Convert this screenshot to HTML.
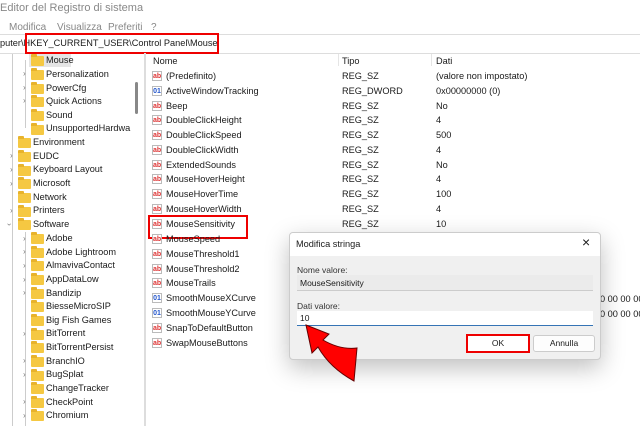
<!DOCTYPE html><html><head><meta charset="utf-8"><style>
body{margin:0;width:640px;height:426px;overflow:hidden;background:#fff;font-family:"Liberation Sans",sans-serif;font-size:9.2px;color:#1a1a1a;position:relative}
.a{position:absolute;white-space:nowrap}
.f{position:absolute;width:13px;height:10px;background:#f5c842;border-radius:1px}
.f:before{content:"";position:absolute;left:0;top:-2px;width:6px;height:3px;background:#e8b32c;border-radius:1px 1px 0 0}
.c{position:absolute;color:#777;font-size:8px}
.ic{position:absolute;width:10px;height:10px;border:1px solid #bbb;background:#fff;font-size:7px;font-weight:bold;color:#d33;line-height:9px;text-align:center;box-sizing:border-box}
.ib{color:#2255cc}
</style></head><body>
<div class="a" style="left:0;top:2px;font-size:11px;color:#888">Editor del Registro di sistema</div>
<div class="a" style="left:9px;top:22px;color:#888;font-size:10px">Modifica</div>
<div class="a" style="left:57px;top:22px;color:#888;font-size:10px">Visualizza</div>
<div class="a" style="left:108px;top:22px;color:#888;font-size:10px">Preferiti</div>
<div class="a" style="left:151px;top:22px;color:#888;font-size:10px">?</div>
<div style="position:absolute;left:0;top:34px;width:640px;height:18px;border-top:1px solid #ddd;border-bottom:1px solid #ddd"></div>
<div class="a" style="left:0;top:38px">puter\HKEY_CURRENT_USER\Control Panel\Mouse</div>
<div style="position:absolute;left:25px;top:33px;width:190px;height:17px;border:2px solid #e00"></div>
<div style="position:absolute;left:144px;top:53px;width:2px;height:373px;background:#ddd"></div>
<div style="position:absolute;left:135px;top:82px;width:3px;height:32px;background:#888;border-radius:2px"></div>
<div style="position:absolute;left:29px;top:54px;width:42px;height:13px;background:#e5e5e5"></div>
<div style="position:absolute;left:25px;top:60px;width:1px;height:68px;background:#ccc"></div>
<div style="position:absolute;left:12px;top:54px;width:1px;height:372px;background:#ccc"></div>
<div class="f" style="left:31px;top:56px"></div><div class="a" style="left:46px;top:55px">Mouse</div>
<div class="c" style="left:23px;top:69px">›</div><div class="f" style="left:31px;top:70px"></div><div class="a" style="left:46px;top:69px">Personalization</div>
<div class="c" style="left:23px;top:83px">›</div><div class="f" style="left:31px;top:84px"></div><div class="a" style="left:46px;top:83px">PowerCfg</div>
<div class="c" style="left:23px;top:96px">›</div><div class="f" style="left:31px;top:97px"></div><div class="a" style="left:46px;top:96px">Quick Actions</div>
<div class="f" style="left:31px;top:111px"></div><div class="a" style="left:46px;top:110px">Sound</div>
<div class="f" style="left:31px;top:125px"></div><div class="a" style="left:46px;top:123px">UnsupportedHardwa</div>
<div class="f" style="left:18px;top:138px"></div><div class="a" style="left:33px;top:137px">Environment</div>
<div class="c" style="left:10px;top:151px">›</div><div class="f" style="left:18px;top:152px"></div><div class="a" style="left:33px;top:151px">EUDC</div>
<div class="c" style="left:10px;top:165px">›</div><div class="f" style="left:18px;top:166px"></div><div class="a" style="left:33px;top:164px">Keyboard Layout</div>
<div class="c" style="left:10px;top:179px">›</div><div class="f" style="left:18px;top:179px"></div><div class="a" style="left:33px;top:178px">Microsoft</div>
<div class="f" style="left:18px;top:193px"></div><div class="a" style="left:33px;top:192px">Network</div>
<div class="c" style="left:10px;top:206px">›</div><div class="f" style="left:18px;top:207px"></div><div class="a" style="left:33px;top:205px">Printers</div>
<div class="c" style="left:8px;top:220px;transform:rotate(90deg)">›</div><div class="f" style="left:18px;top:220px"></div><div class="a" style="left:33px;top:219px">Software</div>
<div style="position:absolute;left:25px;top:232px;width:1px;height:194px;background:#ccc"></div>
<div class="c" style="left:23px;top:234px">›</div><div class="f" style="left:31px;top:234px"></div><div class="a" style="left:46px;top:233px">Adobe</div>
<div class="c" style="left:23px;top:247px">›</div><div class="f" style="left:31px;top:248px"></div><div class="a" style="left:46px;top:247px">Adobe Lightroom</div>
<div class="c" style="left:23px;top:261px">›</div><div class="f" style="left:31px;top:261px"></div><div class="a" style="left:46px;top:260px">AlmavivaContact</div>
<div class="c" style="left:23px;top:275px">›</div><div class="f" style="left:31px;top:275px"></div><div class="a" style="left:46px;top:274px">AppDataLow</div>
<div class="c" style="left:23px;top:288px">›</div><div class="f" style="left:31px;top:289px"></div><div class="a" style="left:46px;top:288px">Bandizip</div>
<div class="f" style="left:31px;top:302px"></div><div class="a" style="left:46px;top:301px">BiesseMicroSIP</div>
<div class="f" style="left:31px;top:316px"></div><div class="a" style="left:46px;top:315px">Big Fish Games</div>
<div class="c" style="left:23px;top:329px">›</div><div class="f" style="left:31px;top:330px"></div><div class="a" style="left:46px;top:328px">BitTorrent</div>
<div class="f" style="left:31px;top:343px"></div><div class="a" style="left:46px;top:342px">BitTorrentPersist</div>
<div class="c" style="left:23px;top:356px">›</div><div class="f" style="left:31px;top:357px"></div><div class="a" style="left:46px;top:356px">BranchIO</div>
<div class="c" style="left:23px;top:370px">›</div><div class="f" style="left:31px;top:371px"></div><div class="a" style="left:46px;top:369px">BugSplat</div>
<div class="f" style="left:31px;top:384px"></div><div class="a" style="left:46px;top:383px">ChangeTracker</div>
<div class="c" style="left:23px;top:397px">›</div><div class="f" style="left:31px;top:398px"></div><div class="a" style="left:46px;top:397px">CheckPoint</div>
<div class="c" style="left:23px;top:411px">›</div><div class="f" style="left:31px;top:411px"></div><div class="a" style="left:46px;top:410px">Chromium</div>
<div style="position:absolute;left:338px;top:54px;width:1px;height:12px;background:#e5e5e5"></div>
<div style="position:absolute;left:431px;top:54px;width:1px;height:12px;background:#e5e5e5"></div>
<div class="a" style="left:153px;top:56px">Nome</div><div class="a" style="left:342px;top:56px">Tipo</div><div class="a" style="left:436px;top:56px">Dati</div>
<div class="ic" style="left:152px;top:71px">ab</div><div class="a" style="left:166px;top:71px">(Predefinito)</div><div class="a" style="left:342px;top:71px">REG_SZ</div><div class="a" style="left:436px;top:71px">(valore non impostato)</div>
<div class="ic ib" style="left:152px;top:86px">01</div><div class="a" style="left:166px;top:86px">ActiveWindowTracking</div><div class="a" style="left:342px;top:86px">REG_DWORD</div><div class="a" style="left:436px;top:86px">0x00000000 (0)</div>
<div class="ic" style="left:152px;top:101px">ab</div><div class="a" style="left:166px;top:101px">Beep</div><div class="a" style="left:342px;top:101px">REG_SZ</div><div class="a" style="left:436px;top:101px">No</div>
<div class="ic" style="left:152px;top:115px">ab</div><div class="a" style="left:166px;top:115px">DoubleClickHeight</div><div class="a" style="left:342px;top:115px">REG_SZ</div><div class="a" style="left:436px;top:115px">4</div>
<div class="ic" style="left:152px;top:130px">ab</div><div class="a" style="left:166px;top:130px">DoubleClickSpeed</div><div class="a" style="left:342px;top:130px">REG_SZ</div><div class="a" style="left:436px;top:130px">500</div>
<div class="ic" style="left:152px;top:145px">ab</div><div class="a" style="left:166px;top:145px">DoubleClickWidth</div><div class="a" style="left:342px;top:145px">REG_SZ</div><div class="a" style="left:436px;top:145px">4</div>
<div class="ic" style="left:152px;top:160px">ab</div><div class="a" style="left:166px;top:160px">ExtendedSounds</div><div class="a" style="left:342px;top:160px">REG_SZ</div><div class="a" style="left:436px;top:160px">No</div>
<div class="ic" style="left:152px;top:174px">ab</div><div class="a" style="left:166px;top:174px">MouseHoverHeight</div><div class="a" style="left:342px;top:174px">REG_SZ</div><div class="a" style="left:436px;top:174px">4</div>
<div class="ic" style="left:152px;top:189px">ab</div><div class="a" style="left:166px;top:189px">MouseHoverTime</div><div class="a" style="left:342px;top:189px">REG_SZ</div><div class="a" style="left:436px;top:189px">100</div>
<div class="ic" style="left:152px;top:204px">ab</div><div class="a" style="left:166px;top:204px">MouseHoverWidth</div><div class="a" style="left:342px;top:204px">REG_SZ</div><div class="a" style="left:436px;top:204px">4</div>
<div class="ic" style="left:152px;top:219px">ab</div><div class="a" style="left:166px;top:219px">MouseSensitivity</div><div class="a" style="left:342px;top:219px">REG_SZ</div><div class="a" style="left:436px;top:219px">10</div>
<div style="position:absolute;left:148px;top:215px;width:96px;height:20px;border:2px solid #e00"></div>
<div class="ic" style="left:152px;top:234px">ab</div><div class="a" style="left:166px;top:234px">MouseSpeed</div>
<div class="ic" style="left:152px;top:249px">ab</div><div class="a" style="left:166px;top:249px">MouseThreshold1</div>
<div class="ic" style="left:152px;top:264px">ab</div><div class="a" style="left:166px;top:264px">MouseThreshold2</div>
<div class="ic" style="left:152px;top:278px">ab</div><div class="a" style="left:166px;top:278px">MouseTrails</div>
<div class="ic ib" style="left:152px;top:293px">01</div><div class="a" style="left:166px;top:293px">SmoothMouseXCurve</div><div class="a" style="left:600px;top:294px">0 00 00 00</div>
<div class="ic ib" style="left:152px;top:308px">01</div><div class="a" style="left:166px;top:308px">SmoothMouseYCurve</div><div class="a" style="left:600px;top:309px">0 00 00 00</div>
<div class="ic" style="left:152px;top:323px">ab</div><div class="a" style="left:166px;top:323px">SnapToDefaultButton</div>
<div class="ic" style="left:152px;top:338px">ab</div><div class="a" style="left:166px;top:338px">SwapMouseButtons</div>
<div style="position:absolute;left:289px;top:232px;width:310px;height:126px;background:#f0f0f0;border:1px solid #ccc;border-radius:4px;box-shadow:0 8px 24px rgba(0,0,0,.25);overflow:hidden">
<div style="position:absolute;left:0;top:0;width:310px;height:23px;background:#fff"></div>
<div class="a" style="left:6px;top:6px">Modifica stringa</div>
<div class="a" style="left:292px;top:1px;font-size:14px">×</div>
<div class="a" style="left:7px;top:32px;font-size:8.5px;color:#333">Nome valore:</div>
<div style="position:absolute;left:7px;top:42px;width:296px;height:15px;background:#ebebeb;border-bottom:1px solid #ccc"></div>
<div class="a" style="left:10px;top:45px;font-size:8.5px">MouseSensitivity</div>
<div class="a" style="left:7px;top:68px;font-size:8.5px;color:#333">Dati valore:</div>
<div style="position:absolute;left:7px;top:78px;width:296px;height:14px;background:#fff;border-bottom:1px solid #3574b5"></div>
<div class="a" style="left:10px;top:80px;font-size:8.5px">10</div>
<div style="position:absolute;left:176px;top:101px;width:60px;height:15px;background:#fff;border:2px solid #e00;text-align:center;line-height:15px;font-size:8.5px">OK</div>
<div style="position:absolute;left:243px;top:102px;width:60px;height:15px;background:#fdfdfd;border:1px solid #ccc;border-radius:3px;text-align:center;line-height:15px;font-size:8.5px">Annulla</div>
</div>
<svg style="position:absolute;left:0;top:0" width="640" height="426"><path d="M306 325 L329 334 L323 340 Q340 350 357 348 L354 381 Q330 368 318 347 L312 353 Z" fill="#f00" stroke="#600" stroke-width="1"/></svg>
</body></html>
